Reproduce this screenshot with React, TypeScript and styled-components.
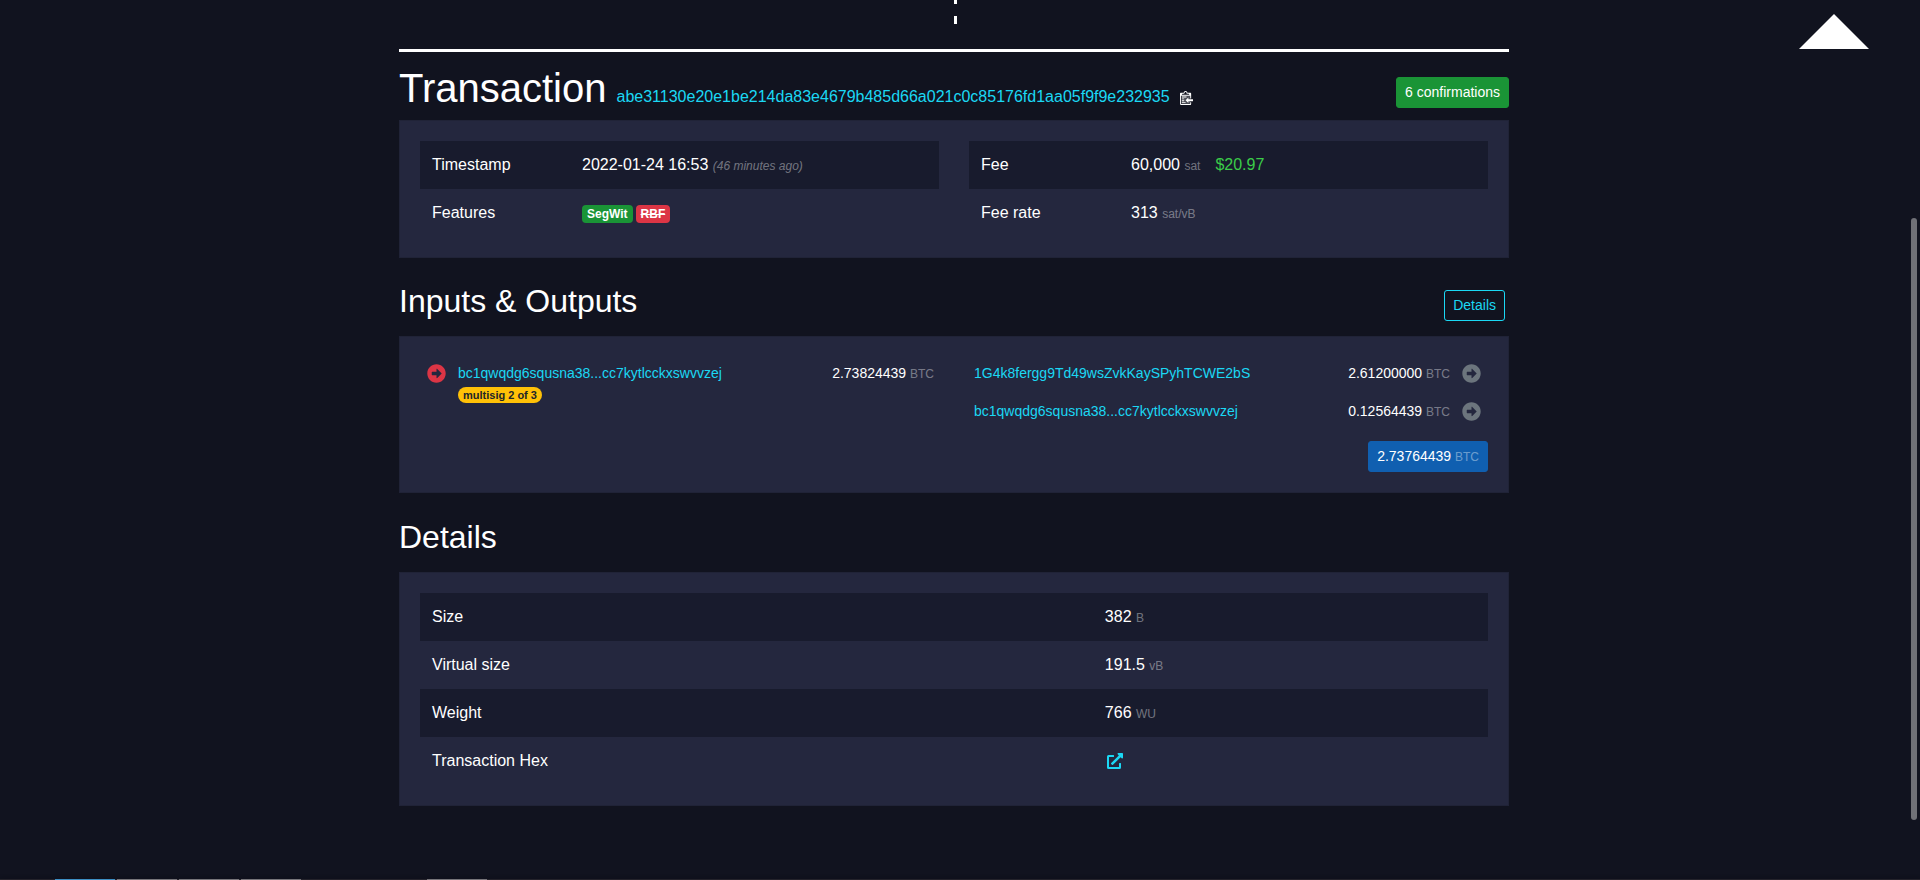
import React from 'react';
import styled, { createGlobalStyle } from 'styled-components';
import { FaArrowAltCircleRight, FaExternalLinkAlt } from 'react-icons/fa';

const color = {
  page: '#11131f',
  card: '#24273e',
  stripe: '#181b2d',
  link: '#1bd8f4',
  green: '#1a9436',
  fiat: '#3bcc49',
  red: '#dc3545',
  yellow: '#ffc107',
  blue: '#105fb0',
  grey: '#6c757d',
  faded: 'rgba(255, 255, 255, 0.4)',
};

const GlobalStyle = createGlobalStyle`
  *, *::before, *::after { box-sizing: border-box; }
  body {
    margin: 0;
    background: ${color.page};
    color: #fff;
    font-family: "Liberation Sans", Arial, sans-serif;
    font-size: 16px;
    line-height: 24px;
  }
`;

const Page = styled.div`
  min-height: 100vh;
  padding-right: 12px;
`;

const Container = styled.main`
  max-width: 1140px;
  margin: 0 auto;
  padding: 0 15px 48px;
`;

const ChainEdge = styled.div`
  height: 52px;
  border-bottom: 3px solid #fff;
`;

const ChainDivider = styled.div`
  width: 3px;
  height: 24px;
  margin-left: 50%;
  background: repeating-linear-gradient(#fff 0 4px, transparent 4px 16px, #fff 16px 24px);
`;

const BackToTop = styled.button`
  position: fixed;
  top: 14px;
  right: 51px;
  width: 70px;
  height: 35px;
  padding: 0;
  border: 0;
  background: #fff;
  clip-path: polygon(50% 0, 100% 100%, 0 100%);
  cursor: pointer;
`;

const ScrollThumb = styled.div`
  position: fixed;
  top: 218px;
  right: 3px;
  bottom: 60px;
  width: 6px;
  border-radius: 3px;
  background: #707177;
`;

const WindowStrip = styled.div`
  position: fixed;
  left: 0;
  right: 0;
  bottom: 0;
  display: flex;
  gap: 2px;
  height: 1px;
  padding-left: 55px;
  background: #24232b;
  box-shadow: 0 0 4px #08090f;
`;

const StripTab = styled.span<{ $active?: boolean; $apart?: boolean }>`
  width: 60px;
  margin-left: ${p => (p.$apart ? 124 : 0)}px;
  background: ${p => (p.$active ? '#3d8fc4' : '#77757a')};
`;

const TitleRow = styled.header`
  display: flex;
  align-items: baseline;
  gap: 10px;
  padding: 12px 0 8px;
`;

const Title = styled.h1`
  margin: 0;
  font-size: 40px;
  font-weight: 400;
  line-height: 48px;
`;

const Link = styled.a`
  color: ${color.link};
  text-decoration: none;
`;

const CopyButton = styled.button`
  align-self: center;
  display: flex;
  margin-top: 18px;
  padding: 0;
  border: 0;
  background: none;
  color: #fff;
  cursor: pointer;
`;

const SmallButton = styled.button<{ $bg?: string; $outline?: boolean }>`
  height: 31px;
  padding: 4px 8px;
  border: 1px solid ${p => (p.$outline ? color.link : p.$bg)};
  border-radius: 3px;
  background: ${p => p.$bg || 'transparent'};
  color: ${p => (p.$outline ? color.link : '#fff')};
  font: 14px/21px "Liberation Sans", Arial, sans-serif;
  cursor: pointer;
`;

const Confirmations = styled(SmallButton)`
  align-self: flex-start;
  margin: 13px 0 0 auto;
`;

const Section = styled.section<{ $gap: number }>`
  margin-top: ${p => p.$gap}px;
`;

const SectionHead = styled.div`
  display: flex;
  justify-content: space-between;
  align-items: flex-end;
  height: 54px;
  padding: 0 4px 15px 0;
`;

const Heading = styled.h2`
  align-self: flex-start;
  margin: 0;
  font-size: 32px;
  font-weight: 400;
  line-height: 38px;
`;

const Card = styled.div`
  padding: 20px;
  border: 1px solid #202337;
  background: ${color.card};
`;

const Columns = styled.div`
  display: grid;
  grid-template-columns: 1fr 1fr;
  gap: 0 30px;
  align-items: start;
`;

const DataTable = styled.table<{ $label: string }>`
  width: 100%;
  table-layout: fixed;
  border-collapse: collapse;

  tr:nth-child(odd) { background: ${color.stripe}; }
  th, td {
    height: 48px;
    padding: 12px;
    font-weight: 400;
    text-align: left;
    vertical-align: top;
  }
  th { width: ${p => p.$label}; }
`;

const Unit = styled.span<{ $italic?: boolean }>`
  color: ${color.faded};
  font-size: 12px;
  font-style: ${p => (p.$italic ? 'italic' : 'normal')};
  line-height: 12px;
`;

const Fiat = styled.span`
  margin-left: 15px;
  color: ${color.fiat};
`;

const Badge = styled.span<{ $bg: string; $off?: boolean }>`
  display: inline-block;
  margin-right: 3px;
  padding: 0 5px;
  border-radius: 4px;
  background: ${p => p.$bg};
  font-size: 12px;
  font-weight: 700;
  line-height: 18px;
  text-decoration: ${p => (p.$off ? 'line-through' : 'none')};
`;

const MultisigBadge = styled.span`
  display: block;
  width: fit-content;
  margin-top: 3px;
  padding: 0 5px;
  border-radius: 8px;
  background: ${color.yellow};
  color: #212529;
  font-size: 11px;
  font-weight: 700;
  line-height: 16px;
`;

const FlowTable = styled.table`
  width: 100%;
  table-layout: fixed;
  border-collapse: collapse;
  font-size: 14px;
  line-height: 22px;

  td {
    height: 38px;
    padding: 5px 5px 11px;
    vertical-align: top;
  }
`;

const ArrowCell = styled.td<{ $color: string }>`
  width: 33px;
  color: ${p => p.$color};
`;

const ArrowBox = styled.span`
  display: flex;
  align-items: center;
  justify-content: center;
  height: 22px;
`;

const AmountCell = styled.td`
  width: 150px;
  text-align: right;
  white-space: nowrap;
`;

const TotalRow = styled.div`
  display: flex;
  justify-content: flex-end;
  margin-top: 8px;
`;

const HexLink = styled(Link)`
  display: flex;
  align-items: center;
  justify-content: center;
  width: 20px;
  height: 24px;
`;

const SpendArrow = ({ tone }: { tone: string }) => (
  <ArrowCell $color={tone}>
    <ArrowBox>
      <FaArrowAltCircleRight size={19} />
    </ArrowBox>
  </ArrowCell>
);

const outputs = [
  { address: '1G4k8fergg9Td49wsZvkKaySPyhTCWE2bS', amount: '2.61200000' },
  { address: 'bc1qwqdg6squsna38...cc7kytlcckxswvvzej', amount: '0.12564439' },
];

const sizes = [
  { label: 'Size', value: '382', unit: 'B' },
  { label: 'Virtual size', value: '191.5', unit: 'vB' },
  { label: 'Weight', value: '766', unit: 'WU' },
];

export default function App() {
  return (
    <Page>
      <GlobalStyle />
      <Container>
        <ChainEdge>
          <ChainDivider />
        </ChainEdge>

        <TitleRow>
          <Title>Transaction</Title>
          <Link href="#tx">abe31130e20e1be214da83e4679b485d66a021c0c85176fd1aa05f9f9e232935</Link>
          <CopyButton aria-label="Copy transaction id">
            <svg width="13" height="15" viewBox="0 0 14 16" fill="currentColor">
              <path d="M1.500 5.500h9.500v9.500h-9.500z" opacity="0.25" />
              <path d="M2 13h4v1H2v-1zm5-6H2v1h5V7zm2 3V8l-3 3 3 3v-2h5v-2H9zM4.500 9H2v1h2.500V9zM2 12h2.500v-1H2v1zm9 1h1v2c-.02.28-.11.52-.3.700-.19.180-.42.280-.7.300H1c-.55 0-1-.45-1-1V4c0-.55.450-1 1-1h3c0-1.110.890-2 2-2s2 .89 2 2h3c.550 0 1 .45 1 1v5h-1V6H1v9h10v-2zM2 5h8c0-.55-.45-1-1-1H8c-.55 0-1-.45-1-1s-.45-1-1-1-1 .45-1 1-.45 1-1 1H3c-.55 0-1 .45-1 1z" />
            </svg>
          </CopyButton>
          <Confirmations $bg={color.green}>6 confirmations</Confirmations>
        </TitleRow>
        <Card>
          <Columns>
            <DataTable $label="150px">
              <tbody>
                <tr>
                  <th scope="row">Timestamp</th>
                  <td>2022-01-24 16:53 <Unit $italic>(46 minutes ago)</Unit></td>
                </tr>
                <tr>
                  <th scope="row">Features</th>
                  <td><Badge $bg={color.green}>SegWit</Badge><Badge $bg={color.red} $off>RBF</Badge></td>
                </tr>
              </tbody>
            </DataTable>
            <DataTable $label="150px">
              <tbody>
                <tr>
                  <th scope="row">Fee</th>
                  <td>60,000 <Unit>sat</Unit><Fiat>$20.97</Fiat></td>
                </tr>
                <tr>
                  <th scope="row">Fee rate</th>
                  <td>313 <Unit>sat/vB</Unit></td>
                </tr>
              </tbody>
            </DataTable>
          </Columns>
        </Card>

        <Section $gap={24}>
          <SectionHead>
            <Heading>Inputs &amp; Outputs</Heading>
            <SmallButton $outline>Details</SmallButton>
          </SectionHead>
          <Card>
            <Columns>
              <FlowTable>
                <tbody>
                  <tr>
                    <SpendArrow tone={color.red} />
                    <td>
                      <Link href="#address">bc1qwqdg6squsna38...cc7kytlcckxswvvzej</Link>
                      <MultisigBadge>multisig 2 of 3</MultisigBadge>
                    </td>
                    <AmountCell>2.73824439 <Unit>BTC</Unit></AmountCell>
                  </tr>
                </tbody>
              </FlowTable>
              <FlowTable>
                <tbody>
                  {outputs.map(o => (
                    <tr key={o.address}>
                      <td><Link href="#address">{o.address}</Link></td>
                      <AmountCell>{o.amount} <Unit>BTC</Unit></AmountCell>
                      <SpendArrow tone={color.grey} />
                    </tr>
                  ))}
                </tbody>
              </FlowTable>
            </Columns>
            <TotalRow>
              <SmallButton $bg={color.blue}>2.73764439 <Unit>BTC</Unit></SmallButton>
            </TotalRow>
          </Card>
        </Section>

        <Section $gap={25}>
          <SectionHead>
            <Heading>Details</Heading>
          </SectionHead>
          <Card>
            <DataTable $label="63%">
              <tbody>
                {sizes.map(s => (
                  <tr key={s.label}>
                    <th scope="row">{s.label}</th>
                    <td>{s.value} <Unit>{s.unit}</Unit></td>
                  </tr>
                ))}
                <tr>
                  <th scope="row">Transaction Hex</th>
                  <td>
                    <HexLink href="#hex" aria-label="Open transaction hex">
                      <FaExternalLinkAlt size={16} />
                    </HexLink>
                  </td>
                </tr>
              </tbody>
            </DataTable>
          </Card>
        </Section>
      </Container>

      <BackToTop aria-label="Back to top" />
      <ScrollThumb />
      <WindowStrip>
        <StripTab $active />
        <StripTab />
        <StripTab />
        <StripTab />
        <StripTab $apart />
      </WindowStrip>
    </Page>
  );
}
